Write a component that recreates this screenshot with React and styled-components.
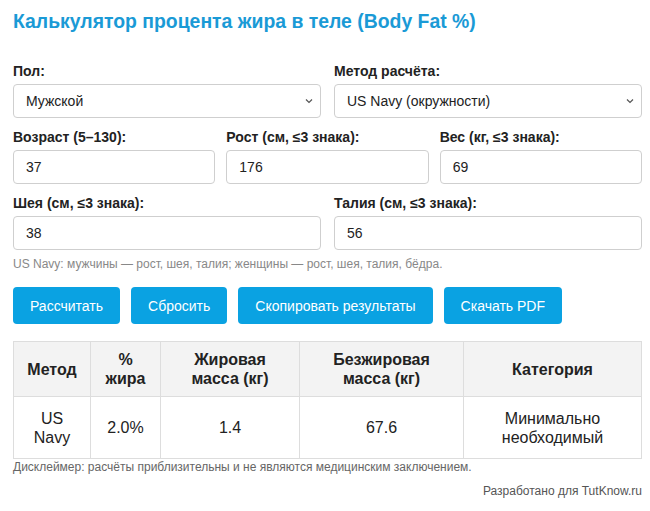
import React from 'react';
import styled, { createGlobalStyle } from 'styled-components';

const GlobalStyle = createGlobalStyle`
  body {
    margin: 0;
    background: #ffffff;
    font-family: "Liberation Sans", Arial, sans-serif;
    color: #222222;
  }
`;

const Page = styled.div`
  padding: 9px 8px 0 13px;
`;

const Title = styled.h1`
  margin: 0 0 30px 0;
  font-size: 19.4px;
  line-height: 24px;
  font-weight: 700;
  color: #1a9ad6;
`;

const Row = styled.div`
  display: grid;
  grid-template-columns: repeat(${(props) => props.cols}, minmax(0, 1fr));
  column-gap: ${(props) => (props.cols === 3 ? '11px' : '13px')};
  margin-bottom: 11px;
`;

const Field = styled.div`
  display: flex;
  flex-direction: column;
  min-width: 0;
`;

const Label = styled.label`
  font-size: 14px;
  line-height: 16px;
  font-weight: 700;
  margin-bottom: 5px;
`;

const Input = styled.input`
  box-sizing: border-box;
  width: 100%;
  height: 34px;
  border: 1px solid #cfcfcf;
  border-radius: 4px;
  padding: 0 12px;
  font-family: inherit;
  font-size: 14px;
  color: #222;
  outline: none;
`;

const SelectWrap = styled.div`
  position: relative;
`;

const Select = styled.select`
  box-sizing: border-box;
  width: 100%;
  height: 34px;
  border: 1px solid #cfcfcf;
  border-radius: 4px;
  padding: 0 12px;
  font-family: inherit;
  font-size: 14px;
  color: #222;
  background: #fff;
  appearance: none;
  outline: none;
`;

const Chevron = styled.svg`
  position: absolute;
  right: 8px;
  top: 14px;
  pointer-events: none;
`;

const Hint = styled.div`
  margin-top: -4px;
  font-size: 12px;
  line-height: 14px;
  color: #888;
`;

const Buttons = styled.div`
  display: flex;
  gap: 11px;
  margin: 16px 0 17px 0;
`;

const Button = styled.button`
  height: 37px;
  padding: 0 17px;
  border: none;
  border-radius: 4px;
  background: #0aa2e2;
  color: #fff;
  font-family: inherit;
  font-size: 14px;
  cursor: pointer;
`;

const Table = styled.table`
  width: 629px;
  border-collapse: collapse;
  font-size: 16px;
  line-height: 19px;
  th, td {
    border: 1px solid #dddddd;
    text-align: center;
    padding: 8px 8px;
  }
  th {
    background: #f3f3f3;
    font-weight: 700;
    height: 38px;
  }
  td {
    height: 45px;
  }
`;

const Disclaimer = styled.div`
  margin-top: 1px;
  font-size: 12px;
  line-height: 14px;
  color: #666;
`;

const Footer = styled.div`
  margin-top: 10px;
  text-align: right;
  font-size: 12px;
  line-height: 14px;
  color: #555;
`;

const SelectField = ({ label, value }) => (
  <Field>
    <Label>{label}</Label>
    <SelectWrap>
      <Select defaultValue={value}>
        <option>{value}</option>
      </Select>
      <Chevron width="8" height="6" viewBox="0 0 8 6">
        <path d="M1 1.5 L4 4.5 L7 1.5" fill="none" stroke="#555" strokeWidth="1.2" />
      </Chevron>
    </SelectWrap>
  </Field>
);

const InputField = ({ label, value }) => (
  <Field>
    <Label>{label}</Label>
    <Input defaultValue={value} />
  </Field>
);

const App = () => (
  <Page>
    <GlobalStyle />
    <Title>Калькулятор процента жира в теле (Body Fat %)</Title>
    <Row cols={2}>
      <SelectField label="Пол:" value="Мужской" />
      <SelectField label="Метод расчёта:" value="US Navy (окружности)" />
    </Row>
    <Row cols={3}>
      <InputField label="Возраст (5–130):" value="37" />
      <InputField label="Рост (см, ≤3 знака):" value="176" />
      <InputField label="Вес (кг, ≤3 знака):" value="69" />
    </Row>
    <Row cols={2}>
      <InputField label="Шея (см, ≤3 знака):" value="38" />
      <InputField label="Талия (см, ≤3 знака):" value="56" />
    </Row>
    <Hint>US Navy: мужчины — рост, шея, талия; женщины — рост, шея, талия, бёдра.</Hint>
    <Buttons>
      <Button>Рассчитать</Button>
      <Button>Сбросить</Button>
      <Button>Скопировать результаты</Button>
      <Button>Скачать PDF</Button>
    </Buttons>
    <Table>
      <colgroup>
        <col style={{ width: 77 }} />
        <col style={{ width: 70 }} />
        <col style={{ width: 139 }} />
        <col style={{ width: 164 }} />
        <col />
      </colgroup>
      <thead>
        <tr>
          <th>Метод</th>
          <th>%<br />жира</th>
          <th>Жировая<br />масса (кг)</th>
          <th>Безжировая<br />масса (кг)</th>
          <th>Категория</th>
        </tr>
      </thead>
      <tbody>
        <tr>
          <td>US<br />Navy</td>
          <td>2.0%</td>
          <td>1.4</td>
          <td>67.6</td>
          <td>Минимально<br />необходимый</td>
        </tr>
      </tbody>
    </Table>
    <Disclaimer>Дисклеймер: расчёты приблизительны и не являются медицинским заключением.</Disclaimer>
    <Footer>Разработано для TutKnow.ru</Footer>
  </Page>
);

export default App;
